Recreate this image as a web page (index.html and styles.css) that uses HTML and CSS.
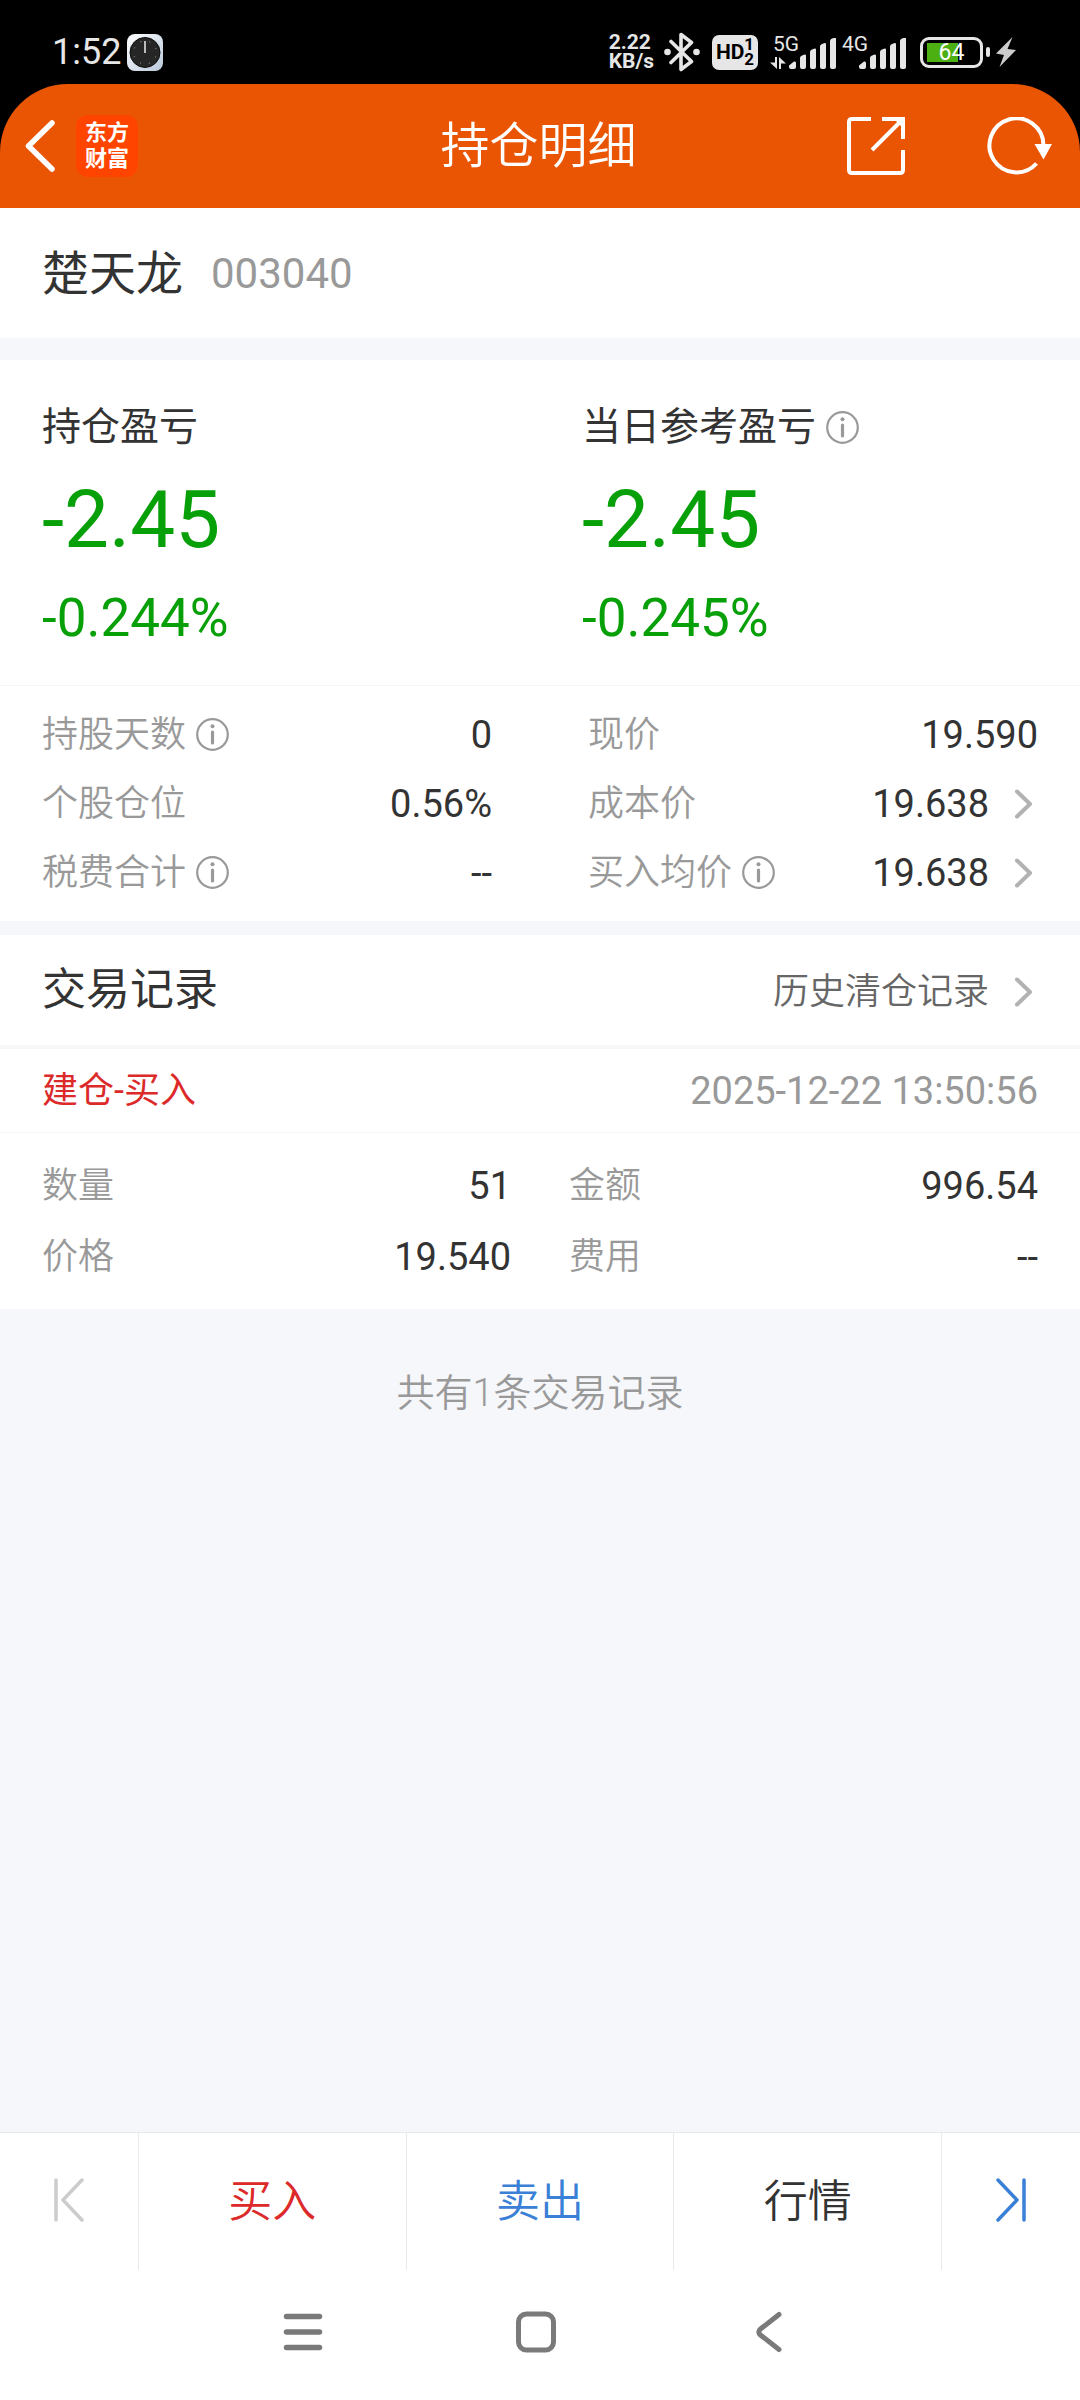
FILE: index.html
```html
<!DOCTYPE html>
<html lang="zh-CN">
<head>
<meta charset="utf-8">
<meta name="viewport" content="width=device-width, initial-scale=1">
<title>持仓明细</title>
<link rel="stylesheet" href="styles.css">
</head>
<body>
<svg class="sprite" aria-hidden="true">
  <symbol id="info" viewBox="0 0 33 33">
    <circle cx="16.5" cy="16.5" r="15.3" fill="none" stroke="currentColor" stroke-width="2.2"/>
    <circle cx="16.5" cy="8.2" r="2" fill="currentColor"/>
    <path d="M16.5 14v11" stroke="currentColor" stroke-width="3.2" stroke-linecap="round"/>
  </symbol>
  <symbol id="chevron" viewBox="0 0 24 30">
    <path d="M3 2.500L16 15L3 27.500" fill="none" stroke="currentColor" stroke-width="4" stroke-linecap="round" stroke-linejoin="round"/>
  </symbol>
  <symbol id="bars" viewBox="0 0 47 31">
    <path fill="currentColor" d="M0 29v-1.500L5 23.500q2-.5 2 1.500v4q0 2-2 2h-3q-2 0-2-2zM11 20q0-1.500 1.500-2.200l2.500-1q2-.8 2 1v11.200q0 2-2 2h-2q-2 0-2-2zM21 14q0-1.500 1.500-2.200l2.500-1q2-.8 2 1v17.200q0 2-2 2h-2q-2 0-2-2zM31 8.500q0-1.500 1.500-2.200l2.500-1q2-.8 2 1v22.700q0 2-2 2h-2q-2 0-2-2zM41 3q0-1.500 1.500-2.200l2.500-1q2-.8 2 1v28.200q0 2-2 2h-2q-2 0-2-2z"/>
  </symbol>
</svg>

<div class="page">
  <div class="status">
    <span class="clock">1:52</span>
    <svg class="clock-app" width="36" height="37" viewBox="0 0 36 37" aria-hidden="true">
      <defs><linearGradient id="tile" x1="0" y1="0" x2="1" y2="1"><stop offset="0" stop-color="#fff"/><stop offset="1" stop-color="#b9c8dc"/></linearGradient></defs>
      <rect width="36" height="37" rx="8" fill="url(#tile)"/>
      <circle cx="18" cy="18.500" r="15" fill="#262626" stroke="#0c0c0c"/>
      <circle cx="18" cy="18.500" r="11.500" fill="none" stroke="#aaa" stroke-width="1" stroke-dasharray="1 8.030" stroke-dashoffset="-4"/>
      <path d="M18 7v12" stroke="#bbb" stroke-width="2"/>
    </svg>
    <div class="status-right">
      <span class="net"><span>2.22</span><span>KB/s</span></span>
      <svg class="bt" width="36" height="40" viewBox="0 0 36 40" aria-hidden="true">
        <path d="M7 9.500L27.500 29.500L17 37.500V2.500L27.500 10.500L7 30.500" fill="none" stroke="currentColor" stroke-width="3.600" stroke-linejoin="round" stroke-linecap="round"/>
        <circle cx="3.500" cy="20" r="3.300" fill="currentColor"/><circle cx="32.500" cy="20" r="3.300" fill="currentColor"/>
      </svg>
      <span class="hd"><span>HD</span><span class="hd-sims"><span>1</span><span>2</span></span></span>
      <span class="signal five"><span>5G</span>
        <svg class="arrows" width="16" height="12" viewBox="0 0 16 12" aria-hidden="true"><path d="M5 0h2v12L0 5.500H5zM9 12h2V6.500H16L9 0z" fill="currentColor"/></svg>
        <svg class="bars" width="47" height="31"><use href="#bars"/></svg></span>
      <span class="signal"><span>4G</span><svg class="bars" width="47" height="31"><use href="#bars"/></svg></span>
      <span class="battery"><span class="battery-body">64</span><span class="battery-tip"></span></span>
      <svg width="20" height="30" viewBox="0 0 20 30" aria-hidden="true"><path fill="#ccc" d="M16.500 0L0 16.500L8 18L3.500 30L20 13L11.500 12z"/></svg>
    </div>
  </div>

  <header class="bar">
    <div class="bar-left">
      <button class="icon-btn" aria-label="返回"><svg width="30" height="52" viewBox="0 0 30 52"><path d="M27 3L3.500 26L27 49" fill="none" stroke="#fff" stroke-width="5.500" stroke-linecap="round" stroke-linejoin="round"/></svg></button>
      <span class="logo"><span>东方</span><span>财富</span></span>
    </div>
    <h1>持仓明细</h1>
    <div class="bar-right">
      <button class="icon-btn" aria-label="分享"><svg width="58" height="58" viewBox="0 0 58 58"><path d="M24 2H5Q2 2 2 5V53Q2 56 5 56H53Q56 56 56 53V33M35 2H56V22M56 2L25 33" fill="none" stroke="#fff" stroke-width="4"/><path d="M47 2H56V11z" fill="#fff"/></svg></button>
      <button class="icon-btn" aria-label="刷新"><svg width="65" height="58" viewBox="0 0 65 58"><path d="M49.500 46.500A27 27 0 1 1 56.500 28" fill="none" stroke="#fff" stroke-width="4"/><path d="M47.500 27H65L56.500 42.500z" fill="#fff"/></svg></button>
    </div>
  </header>

  <main>
    <section class="stock"><h2>楚天龙</h2><span class="code">003040</span></section>

    <section class="position">
      <div class="profit">
        <div class="profit-item"><h3>持仓盈亏</h3><p class="amount">-2.45</p><p class="rate">-0.244%</p></div>
        <div class="profit-item"><h3>当日参考盈亏<svg class="info" width="33" height="33"><use href="#info"/></svg></h3><p class="amount">-2.45</p><p class="rate">-0.245%</p></div>
      </div>
      <dl class="facts">
        <div class="pair"><dt>持股天数<svg class="info" width="33" height="33"><use href="#info"/></svg></dt><dd>0</dd></div>
        <div class="pair"><dt>现价</dt><dd>19.590</dd></div>
        <div class="pair"><dt>个股仓位</dt><dd>0.56%</dd></div>
        <div class="pair"><dt>成本价</dt><dd><a class="more" href="#cost">19.638<svg class="chevron" width="24" height="30"><use href="#chevron"/></svg></a></dd></div>
        <div class="pair"><dt>税费合计<svg class="info" width="33" height="33"><use href="#info"/></svg></dt><dd>--</dd></div>
        <div class="pair"><dt>买入均价<svg class="info" width="33" height="33"><use href="#info"/></svg></dt><dd><a class="more" href="#average">19.638<svg class="chevron" width="24" height="30"><use href="#chevron"/></svg></a></dd></div>
      </dl>
    </section>

    <section class="trades">
      <div class="trades-head"><h2>交易记录</h2><a class="more history" href="#history">历史清仓记录<svg class="chevron" width="24" height="30"><use href="#chevron"/></svg></a></div>
      <div class="trade-title"><h3>建仓-买入</h3><time datetime="2025-12-22T13:50:56">2025-12-22 13:50:56</time></div>
      <dl class="facts trade-facts">
        <div class="pair"><dt>数量</dt><dd>51</dd></div>
        <div class="pair"><dt>金额</dt><dd>996.54</dd></div>
        <div class="pair"><dt>价格</dt><dd>19.540</dd></div>
        <div class="pair"><dt>费用</dt><dd>--</dd></div>
      </dl>
    </section>
    <p class="total">共有1条交易记录</p>
  </main>

  <footer class="actions">
    <button class="step prev" aria-label="上一只" disabled><svg width="30" height="44" viewBox="0 0 30 44"><path d="M2 2V42M28 2L9 22L28 42" fill="none" stroke="currentColor" stroke-width="3.500" stroke-linecap="round" stroke-linejoin="round"/></svg></button>
    <button class="buy">买入</button>
    <button class="sell">卖出</button>
    <button>行情</button>
    <button class="step next" aria-label="下一只"><svg width="30" height="44" viewBox="0 0 30 44"><path d="M28 2V42M2 2L21 22L2 42" fill="none" stroke="currentColor" stroke-width="3.500" stroke-linecap="round" stroke-linejoin="round"/></svg></button>
  </footer>
  <nav class="system">
    <button class="icon-btn" aria-label="最近任务"><svg width="40" height="42" viewBox="0 0 40 42"><path d="M3.500 5.500h33M3.500 21h33M3.500 36.500h33" stroke="currentColor" stroke-width="5.500" stroke-linecap="round"/></svg></button>
    <button class="icon-btn" aria-label="主屏幕"><svg width="40" height="42" viewBox="0 0 40 42"><rect x="2.500" y="3" width="35" height="36" rx="8" fill="none" stroke="currentColor" stroke-width="5"/></svg></button>
    <button class="icon-btn" aria-label="返回上一页"><svg width="40" height="42" viewBox="0 0 40 42"><path d="M30 3.500L11.500 18Q8 21 11.500 24L30 38.500" fill="none" stroke="currentColor" stroke-width="5" stroke-linecap="round"/></svg></button>
  </nav>
</div>
</body>
</html>
```
FILE: styles.css
```css
* { box-sizing: border-box; margin: 0; padding: 0; }

body {
  font-family: Roboto, "Noto Sans CJK SC", sans-serif;
  font-size: 36px;
  line-height: 60px;
  color: #333;
  background: #fff;
}

svg { display: block; flex: none; }
.sprite { position: absolute; width: 0; height: 0; }
button { border: 0; background: none; font: inherit; color: inherit; cursor: pointer; }
a { color: inherit; text-decoration: none; }
h1, h2, h3 { font-weight: 400; }

.page {
  min-height: 100vh;
  display: flex;
  flex-direction: column;
  background: linear-gradient(#000, #000) 0 0 / 100% 160px no-repeat;
}

/* status bar */
.status {
  display: flex;
  align-items: center;
  height: 84px;
  padding: 20px 64px 0 52px;
  background: #000;
  color: #e6e6e6;
}
.clock { font-size: 36px; line-height: 40px; }
.clock-app { margin-left: 6px; }
.status-right { display: flex; align-items: center; margin-left: auto; }
.net { display: flex; flex-direction: column; font-size: 21px; font-weight: 700; line-height: 19px; }
.bt { margin-left: 10px; }
.hd {
  display: flex;
  align-items: center;
  justify-content: center;
  width: 46px;
  height: 35px;
  margin-left: 12px;
  border-radius: 7px;
  background: #e6e6e6;
  color: #000;
  font-size: 21px;
  font-weight: 700;
}
.hd-sims { display: flex; flex-direction: column; font-size: 17px; line-height: 15px; }
.signal {
  position: relative;
  display: flex;
  align-items: flex-end;
  justify-content: flex-end;
  width: 64px;
  height: 34px;
  margin-left: 6px;
  font-size: 21px;
  line-height: 18px;
}
.signal.five { width: 66px; margin-left: 12px; }
.signal > span { position: absolute; left: 0; top: 0; }
.signal .arrows { margin-right: 3px; }
.signal.five > span { left: 3px; }
.battery { display: flex; align-items: center; margin: 0 6px 0 14px; }
.battery-body {
  width: 63px;
  height: 31px;
  border: 3px solid #e6e6e6;
  border-radius: 9px;
  padding: 0 4px;
  background: linear-gradient(#4caf12, #4caf12) 4px 3px / 31px 19px no-repeat;
  color: #fff;
  font-size: 23px;
  line-height: 26px;
  text-align: center;
}
.battery-tip { width: 4px; height: 10px; margin-left: 3px; border-radius: 2px; background: #e6e6e6; }

/* title bar */
.bar {
  display: grid;
  grid-template-columns: 1fr auto 1fr;
  align-items: center;
  height: 124px;
  padding: 0 28px 0 25px;
  border-radius: 68px 68px 0 0;
  background: #ea5504;
  color: #fff;
}
.bar h1 { padding-top: 2px; font-size: 49px; font-weight: 350; }
.bar-left, .bar-right { display: flex; align-items: center; }
.bar-left { gap: 21px; }
.bar-right { justify-content: flex-end; gap: 82px; }
.logo {
  display: flex;
  flex-direction: column;
  align-items: center;
  justify-content: center;
  width: 62px;
  height: 62px;
  border-radius: 12px;
  background: #ff4400;
  font-size: 22px;
  font-weight: 700;
  line-height: 26px;
}

/* content */
main { flex: 1; background: #f6f7fa; }
.stock {
  display: flex;
  align-items: center;
  gap: 28px;
  height: 130px;
  margin-bottom: 22px;
  padding: 2px 42px 0;
  background: #fff;
}
.stock h2 { font-size: 47px; }
.code { font-size: 42px; color: #999; }

.position { margin-bottom: 14px; background: #fff; }
.profit { display: grid; grid-template-columns: 1fr 1fr; border-bottom: 1px solid #f5f5f5; }
.profit-item { padding: 37px 0 37px 42px; }
.profit h3 { display: flex; align-items: center; font-size: 39px; }
.info { margin-left: 10px; color: #999; }
.amount, .rate { color: #08a008; }
.amount { margin-top: 13px; font-size: 80px; line-height: 100px; }
.rate { margin-top: 18px; font-size: 53px; }

.facts { display: grid; grid-template-columns: 1fr 1fr; column-gap: 96px; padding: 14px 42px; }
.pair { display: flex; align-items: center; justify-content: space-between; height: 69px; }
.pair dt { display: flex; align-items: center; color: #999; font-weight: 350; }
.pair dd { font-size: 38px; }
.more { display: flex; align-items: center; gap: 25px; }
.chevron { color: #b2b2b2; }

.trades { background: #fff; }
.trades-head, .trade-title { display: flex; align-items: center; justify-content: space-between; padding: 0 42px; }
.trades-head { height: 114px; border-bottom: 4px solid #f6f7f8; }
.trades-head h2 { font-size: 44px; }
.history { padding-top: 4px; font-weight: 350; color: #666; }
.trade-title { height: 84px; border-bottom: 1px solid #f5f5f5; }
.trade-title h3 { font-size: 36px; color: #dc2a2a; }
.trade-title time { font-size: 38px; color: #999; }
.trade-facts { column-gap: 58px; padding: 17px 42px; }
.trade-facts .pair { height: 71px; }
.total { padding: 54px 42px; text-align: center; font-size: 38px; font-weight: 350; color: #999; }

/* bottom actions */
.actions {
  display: grid;
  grid-template-columns: 138px 1fr 1fr 1fr 139px;
  height: 138px;
  border-top: 1px solid #e9e9e9;
  background: #fff;
  font-size: 44px;
  font-weight: 350;
}
.actions button { display: flex; align-items: center; justify-content: center; }
.actions button + button { border-left: 1px solid #e9e9e9; }
.actions .step { padding-bottom: 3px; }
.actions .prev { color: #ccc; }
.actions .buy { color: #dc2a2a; }
.actions .sell, .actions .next { color: #3a80d6; }

.system {
  display: flex;
  align-items: center;
  justify-content: center;
  gap: 193px;
  height: 130px;
  padding: 0 8px 6px 0;
  background: #fff;
  color: #7a7a7a;
}
```
